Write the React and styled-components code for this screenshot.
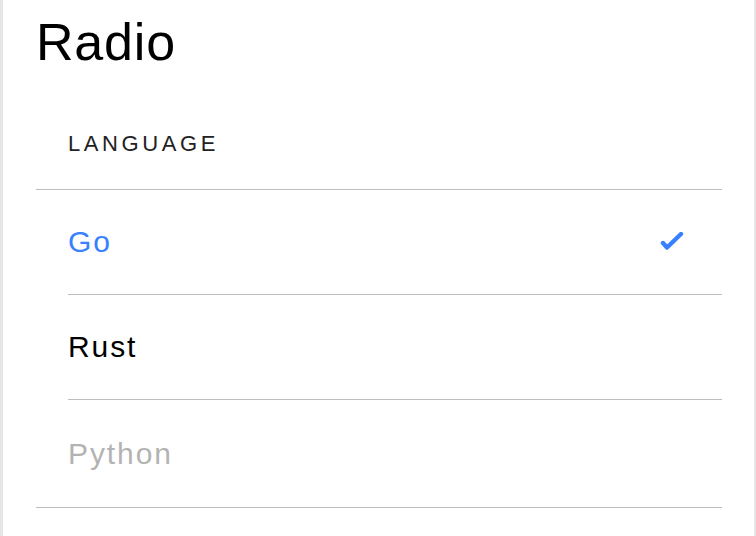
import React from "react"
import styled, { createGlobalStyle } from "styled-components"

const GlobalStyle = createGlobalStyle`
  html, body {
    margin: 0;
    padding: 0;
    background: #ffffff;
    font-family: "Liberation Sans", Arial, sans-serif;
  }
`

const Page = styled.div`
  box-sizing: border-box;
  min-height: 536px;
  border-left: 3px solid #e6e6e6;
  border-right: 2px solid #e6e6e6;
  padding: 12px 32px 0 33px;
`

const Title = styled.h1`
  margin: 0;
  font-size: 52px;
  font-weight: 400;
  line-height: normal;
  letter-spacing: 0.8px;
  color: #000000;
`

const ListHeader = styled.div`
  margin-top: 59px;
  padding-left: 32px;
  font-size: 22px;
  line-height: normal;
  letter-spacing: 3.6px;
  color: #222222;
`

const List = styled.div`
  margin-top: 32px;
  border-top: 1px solid #bdbcc1;
  border-bottom: 1px solid #bdbcc1;
`

const Row = styled.div`
  display: flex;
  align-items: center;
  padding-left: 32px;
`

const RowInner = styled.div`
  flex: 1;
  display: flex;
  align-items: center;
  justify-content: space-between;
  height: 104px;
  padding-right: 38px;
  border-bottom: 1px solid #bdbcc1;
  font-size: 30px;
  letter-spacing: 1.9px;
  color: ${p => (p.$checked ? "#3880ff" : p.$disabled ? "#b3b3b3" : "#000000")};

  ${Row}:last-child & {
    border-bottom: none;
    height: 107px;
  }
`

const Check = () => (
  <svg width="24" height="20" viewBox="0 0 24 20">
    <polyline
      points="3,11 7,15.5 21,2"
      fill="none"
      stroke="#3880ff"
      strokeWidth="4.4"
      strokeLinecap="round"
      strokeLinejoin="round"
    />
  </svg>
)

const languages = [
  { name: "Go", checked: true },
  { name: "Rust" },
  { name: "Python", disabled: true }
]

const App = () => {
  return (
    <Page>
      <GlobalStyle />
      <Title>Radio</Title>
      <ListHeader>LANGUAGE</ListHeader>
      <List>
        {languages.map(item => (
          <Row key={item.name}>
            <RowInner $checked={item.checked} $disabled={item.disabled}>
              <span>{item.name}</span>
              {item.checked && <Check />}
            </RowInner>
          </Row>
        ))}
      </List>
    </Page>
  )
}

export default App
